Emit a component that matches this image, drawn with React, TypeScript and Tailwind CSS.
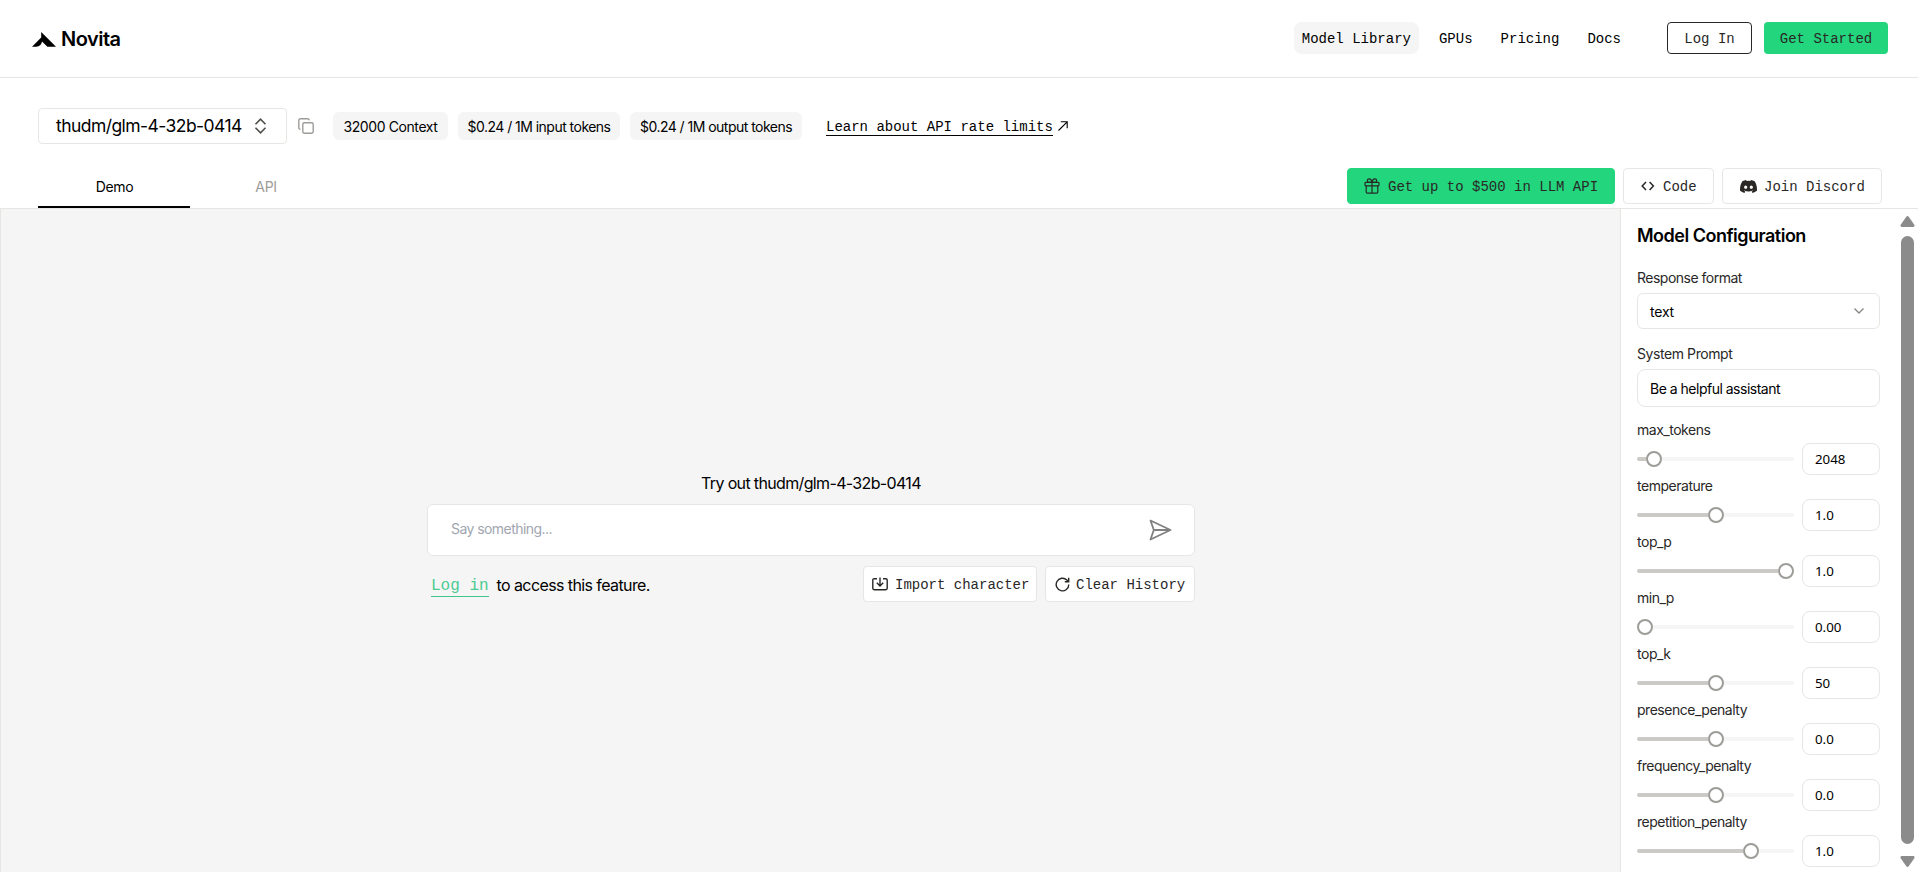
import { useState } from 'react';
import type { ReactNode } from 'react';

const navItems = ['Model Library', 'GPUs', 'Pricing', 'Docs'];

const badges = [
  { text: '32000 Context', width: 'w-[115px]', tracking: 'tracking-[-0.4px]' },
  { text: '$0.24 / 1M input tokens', width: 'w-[162px]', tracking: 'tracking-[-0.53px]' },
  { text: '$0.24 / 1M output tokens', width: 'w-[172px]', tracking: 'tracking-[-0.53px]' },
];

// pos is the left edge of the thumb inside the 157px track
const params = [
  { name: 'max_tokens', value: '2048', pos: 9 },
  { name: 'temperature', value: '1.0', pos: 71 },
  { name: 'top_p', value: '1.0', pos: 141 },
  { name: 'min_p', value: '0.00', pos: 0 },
  { name: 'top_k', value: '50', pos: 71 },
  { name: 'presence_penalty', value: '0.0', pos: 71 },
  { name: 'frequency_penalty', value: '0.0', pos: 71 },
  { name: 'repetition_penalty', value: '1.0', pos: 106 },
];

function Logo() {
  return (
    <a href="#" className="flex items-center">
      <svg width="24" height="15" viewBox="0 0 24 15" fill="#000">
        <path d="M9.200 0v5.400L0 14.800h4.200C7.600 14.400 9.400 12.600 10 9.400l5.400 5.400H24z" />
      </svg>
      <span className="ml-[5px] text-[20px] font-semibold leading-6 tracking-[-0.5px] text-black">Novita</span>
    </a>
  );
}

function Header() {
  return (
    <header className="flex h-[78px] shrink-0 items-start justify-between border-b border-[#e7e6e2] pl-8 pr-[30px] pt-[22px]">
      <div className="pt-[5px]">
        <Logo />
      </div>
      <div className="flex items-center font-['Liberation_Mono',monospace] text-sm">
        <nav className="flex items-center gap-3 text-black">
          {navItems.map((item, i) => (
            <a
              key={item}
              href="#"
              className={`flex h-8 items-center px-2 pt-[2px] ${i === 0 ? 'rounded-lg bg-[#f5f5f5]' : ''}`}
            >
              {item}
            </a>
          ))}
        </nav>
        <button className="ml-[38px] h-8 w-[85px] rounded border border-[#292827] pt-[2px] text-[#292827]">Log In</button>
        <button className="ml-3 h-8 w-[124px] rounded bg-[#23d57c] pt-[2px] text-[#292827]">Get Started</button>
      </div>
    </header>
  );
}

function ModelBar() {
  return (
    <div className="flex h-9 items-center">
      <button className="flex h-9 w-[249px] items-center rounded border border-[#e7e6e2] pl-[17px] text-black">
        <span className="w-[187px] whitespace-nowrap text-left text-[17.5px] tracking-[-0.56px]">thudm/glm-4-32b-0414</span>
        <svg className="ml-[11px]" width="13" height="16" viewBox="0 0 13 16" fill="none" stroke="#4f4e4a" strokeWidth="1.6">
          <path d="M1.5 6.2 6.5 1.2l5 5M1.5 9.8l5 5 5-5" />
        </svg>
      </button>
      <svg className="ml-[11px]" width="16" height="16" viewBox="0 0 16 16" fill="none" stroke="#9e9c98" strokeWidth="1.4">
        <rect x="4.8" y="4.8" width="10.4" height="10.4" rx="1.4" />
        <path d="M2.4 11.2A1.5 1.5 0 0 1 .8 9.7V2.3A1.5 1.5 0 0 1 2.3.8h7.4a1.5 1.5 0 0 1 1.5 1.6" />
      </svg>
      <div className="ml-[19px] flex gap-[10px]">
        {badges.map((b) => (
          <span
            key={b.text}
            className={`flex h-7 items-center justify-center whitespace-nowrap rounded-md bg-[#f5f5f5] pt-px text-sm text-black ${b.width} ${b.tracking}`}
          >
            {b.text}
          </span>
        ))}
      </div>
      <a href="#" className="ml-6 flex items-center font-['Liberation_Mono',monospace] text-sm text-black">
        <span className="border-b border-black pt-[2px] leading-4">Learn about API rate limits</span>
        <svg className="ml-[5px]" width="10" height="10" viewBox="0 0 10 10" fill="none" stroke="#000" strokeWidth="1.1">
          <path d="M.5 9.5 9.2.8M2.8.8h6.4v6.4" />
        </svg>
      </a>
    </div>
  );
}

function ActionButton({ icon, children, className }: { icon: ReactNode; children: ReactNode; className: string }) {
  return (
    <button
      className={`flex h-9 items-center whitespace-nowrap rounded border font-['Liberation_Mono',monospace] text-sm text-[#292827] ${className}`}
    >
      {icon}
      <span className="pt-[2px]">{children}</span>
    </button>
  );
}

function GiftIcon() {
  return (
    <svg className="mr-2" width="16" height="16" viewBox="0 0 16 16" fill="none" stroke="#292827" strokeWidth="1.2" strokeLinejoin="round">
      <rect x="1" y="4.4" width="14" height="3.4" rx=".8" />
      <path d="M2.2 7.8v6.1c0 .7.5 1.2 1.2 1.2h9.2c.7 0 1.2-.5 1.2-1.2V7.8M8 4.4v10.7M8 4.4C7.6 2.2 6.6.8 5.2.8 2.8.8 2.6 4.4 5.2 4.4zM8 4.4C8.4 2.2 9.4.8 10.8.8c2.4 0 2.6 3.6 0 3.6z" />
    </svg>
  );
}

function CodeIcon() {
  return (
    <svg className="mr-2" width="14" height="10" viewBox="0 0 14 10" fill="none" stroke="#292827" strokeWidth="1.5">
      <path d="M5 1 1.2 5 5 9M8.600 1l3.800 4-3.800 4" />
    </svg>
  );
}

function DiscordIcon() {
  return (
    <svg className="mr-[7px]" width="17" height="17" viewBox="0 0 24 24" fill="#292827">
      <path d="M20.317 4.370a19.800 19.800 0 0 0-4.885-1.515.074.074 0 0 0-.079.037c-.21.375-.444.865-.608 1.250a18.270 18.270 0 0 0-5.487 0 12.640 12.640 0 0 0-.617-1.250.077.077 0 0 0-.079-.037A19.740 19.740 0 0 0 3.677 4.370a.07.07 0 0 0-.032.028C.533 9.046-.319 13.580.099 18.058a.082.082 0 0 0 .031.056 19.900 19.900 0 0 0 5.993 3.030.078.078 0 0 0 .084-.028c.462-.63.874-1.295 1.226-1.994a.076.076 0 0 0-.042-.106 13.100 13.100 0 0 1-1.872-.892.077.077 0 0 1-.008-.128c.126-.094.252-.192.372-.291a.074.074 0 0 1 .078-.01c3.928 1.793 8.180 1.793 12.061 0a.074.074 0 0 1 .079.009c.12.099.246.198.373.292a.077.077 0 0 1-.006.128 12.300 12.300 0 0 1-1.873.891.077.077 0 0 0-.041.107c.36.698.772 1.363 1.225 1.993a.076.076 0 0 0 .084.029 19.840 19.840 0 0 0 6.002-3.030.077.077 0 0 0 .032-.055c.5-5.177-.838-9.674-3.549-13.660a.061.061 0 0 0-.031-.029zM8.020 15.331c-1.183 0-2.157-1.086-2.157-2.419s.956-2.419 2.157-2.419c1.210 0 2.176 1.095 2.157 2.419 0 1.333-.956 2.419-2.157 2.419zm7.975 0c-1.183 0-2.157-1.086-2.157-2.419s.955-2.419 2.157-2.419c1.210 0 2.176 1.095 2.157 2.419 0 1.333-.946 2.419-2.157 2.419z" />
    </svg>
  );
}

function TabBar() {
  return (
    <div className="mt-6 flex h-10 items-start justify-between">
      <div className="flex h-full text-sm tracking-[-0.35px]">
        <button className="flex w-[152px] items-center justify-center border-b-2 border-black pl-px text-black">Demo</button>
        <button className="flex w-[152px] items-center justify-center pb-[2px] text-[#9e9c98]">API</button>
      </div>
      <div className="flex gap-2">
        <ActionButton icon={<GiftIcon />} className="w-[268px] border-[#23d57c] bg-[#23d57c] pl-4">
          Get up to $500 in LLM API
        </ActionButton>
        <ActionButton icon={<CodeIcon />} className="w-[91px] border-[#e7e6e2] bg-white pl-[17px]">
          Code
        </ActionButton>
        <ActionButton icon={<DiscordIcon />} className="w-[160px] border-[#e7e6e2] bg-white pl-[17px]">
          Join Discord
        </ActionButton>
      </div>
    </div>
  );
}

function Playground() {
  return (
    <main className="flex flex-1 flex-col items-center border-l border-[#e7e6e2] bg-[#f5f5f5] pl-px pt-[262px]">
      <p className="whitespace-nowrap text-base leading-6 tracking-[-0.65px] text-black">Try out thudm/glm-4-32b-0414</p>
      <div className="mt-[9px] flex h-[52px] w-[768px] items-center justify-between rounded-md border border-[#e7e6e2] bg-white pl-[23px] pr-[22px]">
        <input
          className="w-[400px] pb-[3px] text-sm tracking-[-0.56px] outline-none placeholder:text-[#a1a6b0]"
          placeholder="Say something..."
        />
        <svg width="23" height="22" viewBox="0 0 23 22" fill="none" stroke="#808080" strokeWidth="1.8" strokeLinejoin="round">
          <path d="M1.5 1.5 21.5 11l-20 9.500L4.800 11zM4.800 11h16.700" />
        </svg>
      </div>
      <div className="mt-[10px] flex w-[768px] items-center justify-between">
        <div className="flex items-center pl-[4px] pt-[2px] text-base text-black">
          <a href="#" className="border-b border-[#3fc88a] pt-[2px] font-['Liberation_Mono',monospace] leading-5 text-[#4ccb91]">
            Log in
          </a>
          <span className="ml-[8px] tracking-[-0.6px]">to access this feature.</span>
        </div>
        <div className="flex gap-2">
          <ActionButton
            className="w-[174px] border-[#e7e6e2] bg-white pl-2"
            icon={
              <svg className="mr-[7px]" width="16" height="14" viewBox="0 0 16 14" fill="none" stroke="#292827" strokeWidth="1.4">
                <path d="M5 1.7H2.2c-.8 0-1.4.6-1.4 1.4v8.200c0 .8.6 1.400 1.400 1.400h11.600c.8 0 1.400-.6 1.400-1.400V3.100c0-.8-.6-1.400-1.400-1.400H11M8 .5v8.200M4.800 5.800 8 9l3.200-3.200" />
              </svg>
            }
          >
            Import character
          </ActionButton>
          <ActionButton
            className="w-[150px] border-[#e7e6e2] bg-white pl-[9px]"
            icon={
              <svg className="mr-[6px]" width="15" height="15" viewBox="0 0 15 15" fill="none" stroke="#292827" strokeWidth="1.4">
                <path d="M13.800 7.500a6.300 6.300 0 1 1-2-4.600l1.700 1.700M13.700.8v4H9.800" />
              </svg>
            }
          >
            Clear History
          </ActionButton>
        </div>
      </div>
    </main>
  );
}

function ParamRow({ name, value, pos }: { name: string; value: string; pos: number }) {
  const [val, setVal] = useState(value);

  return (
    <div className="h-14">
      <div className="h-[24px] text-sm leading-[22px] tracking-[-0.48px] text-[#292827]">{name}</div>
      <div className="flex items-center gap-2">
        <div className="flex h-4 w-[157px] items-center">
          <div className="h-1 rounded-l-full bg-[#cbcac6]" style={{ width: pos }} />
          <div className="size-4 shrink-0 rounded-full border-2 border-[#9e9c98] bg-white" />
          <div className="h-1 flex-1 rounded-r-full bg-[#f5f5f5]" />
        </div>
        <input
          value={val}
          onChange={(e) => setVal(e.target.value)}
          className="h-8 w-[78px] rounded-lg border border-[#e7e6e2] pl-3 font-['Noto_Sans',sans-serif] text-[13.3px] text-black outline-none"
        />
      </div>
    </div>
  );
}

function ConfigPanel() {
  return (
    <aside className="flex w-[298px] justify-between border-l border-[#e7e6e2] bg-white">
      <div className="w-[260px] pl-4">
        <h2 className="mt-[13px] whitespace-nowrap text-lg font-semibold leading-7 tracking-[-0.5px] text-black">Model Configuration</h2>
        <div className="mt-[18px] text-sm leading-5 tracking-[-0.5px] text-[#292827]">Response format</div>
        <button className="mt-[5px] flex h-9 w-[243px] items-center justify-between rounded-md border border-[#e7e6e2] pl-3 pr-[14px] text-sm tracking-[-0.2px] text-black">
          <span className="pt-px">text</span>
          <svg width="12" height="8" viewBox="0 0 12 8" fill="none" stroke="#8a8884" strokeWidth="1.4">
            <path d="m1.5 1.5 4.500 4.500 4.500-4.500" />
          </svg>
        </button>
        <div className="mt-[15px] text-sm leading-5 tracking-[-0.42px] text-[#292827]">System Prompt</div>
        <div className="mt-[5px] flex h-[38px] w-[243px] items-center rounded-lg border border-[#e7e6e2] pl-3 pt-px text-sm tracking-[-0.5px] text-black">
          Be a helpful assistant
        </div>
        <div className="mt-[12px]">
          {params.map((p) => (
            <ParamRow key={p.name} name={p.name} value={p.value} pos={p.pos} />
          ))}
        </div>
      </div>
      {/* Scrollbar */}
      <div className="flex w-[21px] flex-col items-center pt-[7px]">
        <svg width="15" height="11" viewBox="0 0 15 11" fill="#8b8b8b">
          <path d="M6.3.8a1.500 1.500 0 0 1 2.400 0l5.600 8c.6 1 0 2.200-1.200 2.200H1.900C.7 11 .1 9.800.7 8.800z" />
        </svg>
        <div className="mt-[9px] h-[608px] w-[13px] rounded-full bg-[#8b8b8b]" />
        <svg className="mt-[12px]" width="15" height="11" viewBox="0 0 15 11" fill="#8b8b8b">
          <path d="M6.3 10.200a1.500 1.500 0 0 0 2.400 0l5.600-8C14.900 1.200 14.300 0 13.100 0H1.900C.7 0 .1 1.200.7 2.200z" />
        </svg>
      </div>
    </aside>
  );
}

export default function App() {
  return (
    <div className="flex h-[872px] w-[1918px] flex-col overflow-hidden bg-white font-['Inter',sans-serif]">
      <Header />
      <section className="h-[131px] shrink-0 border-b border-[#e7e6e2] pl-[38px] pr-9 pt-[30px]">
        <ModelBar />
        <TabBar />
      </section>
      <div className="flex flex-1">
        <Playground />
        <ConfigPanel />
      </div>
    </div>
  );
}
